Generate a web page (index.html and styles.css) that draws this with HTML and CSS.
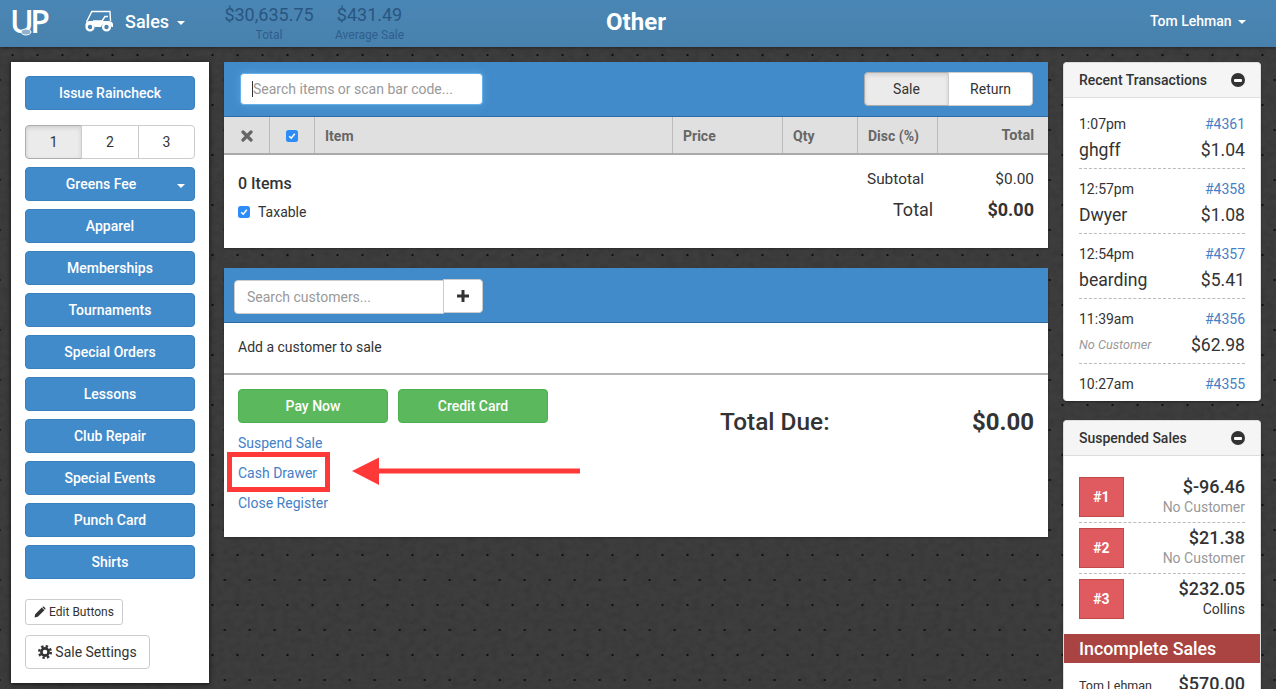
FILE: index.html
```html
<!DOCTYPE html>
<html lang="en">
<head>
<meta charset="utf-8">
<title>Other</title>
<link rel="stylesheet" href="styles.css">
</head>
<body>
<div class="page">
  <svg class="leather" width="1276" height="689" aria-hidden="true">
    <filter id="grain" x="0" y="0" width="100%" height="100%">
      <feTurbulence type="fractalNoise" baseFrequency="0.12 0.16" numOctaves="3" seed="4"/>
      <feColorMatrix type="matrix" values="0 0 0 0 0  0 0 0 0 0  0 0 0 0 0  1.1 0 0 0 -0.42"/>
    </filter>
    <rect width="1276" height="689" filter="url(#grain)"/>
  </svg>
  <header class="topbar">
    <div class="top-left">
      <div class="logo"><span class="logo-text">UP</span>
        <svg class="logo-ball" width="12" height="8" viewBox="0 0 12 8"><ellipse cx="6" cy="4" rx="5" ry="3" fill="#8fb3cf" stroke="#fff" stroke-width="1"/></svg>
      </div>
      <svg class="cart" width="30" height="24" viewBox="0 0 30 24">
        <path d="M2.500 13 L7.800 2.500 H26.500 M26 2.500 L26.500 12 M9 12 H18 L21 7.500 H24" fill="none" stroke="#fff" stroke-width="1.400"/>
        <path d="M1.500 15 Q2 12.500 5 12 H25 Q28.500 12.500 29 15 L29 18 H27.500 A5.500 5.500 0 0 0 17 18 H11 A5.500 5.500 0 0 0 1.500 17 Z" fill="#fff"/>
        <circle cx="6" cy="18" r="3.400" fill="none" stroke="#fff" stroke-width="2.400"/>
        <circle cx="22.500" cy="18" r="3.400" fill="none" stroke="#fff" stroke-width="2.400"/>
      </svg>
      <div class="module">Sales <span class="caret"></span></div>
      <div class="stat stat-total"><div class="stat-num">$30,635.75</div><div class="stat-label">Total</div></div>
      <div class="stat"><div class="stat-num">$431.49</div><div class="stat-label">Average Sale</div></div>
    </div>
    <div class="top-title">Other</div>
    <div class="top-right">Tom Lehman <span class="caret caret-sm"></span></div>
  </header>

  <main class="columns">
    <aside class="side">
      <a class="btn-blue">Issue Raincheck</a>
      <div class="seg">
        <span class="seg-item seg-on">1</span><span class="seg-item">2</span><span class="seg-item">3</span>
      </div>
      <a class="btn-blue btn-split">Greens Fee <span class="caret caret-xs"></span></a>
      <a class="btn-blue">Apparel</a>
      <a class="btn-blue">Memberships</a>
      <a class="btn-blue">Tournaments</a>
      <a class="btn-blue">Special Orders</a>
      <a class="btn-blue">Lessons</a>
      <a class="btn-blue">Club Repair</a>
      <a class="btn-blue">Special Events</a>
      <a class="btn-blue">Punch Card</a>
      <a class="btn-blue">Shirts</a>
      <a class="btn-small">
        <svg width="12" height="12" viewBox="0 0 12 12"><path d="M0.500 11.500 L1.200 8.200 L7.800 1.600 L10.400 4.200 L3.800 10.800 Z M8.600 0.800 Q9.300 0.200 10 0.800 L11.200 2 Q11.800 2.700 11.200 3.400 L10.900 3.700 L8.300 1.100 Z" fill="#333"/></svg>
        Edit Buttons</a>
      <a class="btn-settings">
        <svg width="14" height="14" viewBox="0 0 14 14"><circle cx="7" cy="7" r="5.800" fill="none" stroke="#333" stroke-width="2.400" stroke-dasharray="2.400 2.150"/><circle cx="7" cy="7" r="3.600" fill="none" stroke="#333" stroke-width="2.600"/></svg>
        Sale Settings</a>
    </aside>

    <section class="center">
      <div class="panel cart-panel">
        <div class="bluebar bar-items">
          <div class="search-wrap">
            <input class="search-input" type="text" placeholder="Search items or scan bar code...">
            <span class="text-cursor"></span>
          </div>
          <div class="toggle"><span class="toggle-item toggle-on">Sale</span><span class="toggle-item">Return</span></div>
        </div>
        <div class="thead">
          <div class="th th-c">
            <svg width="12" height="12" viewBox="0 0 12 12"><path d="M2 2 L10 10 M10 2 L2 10" stroke="#666" stroke-width="3.200" stroke-linecap="round"/></svg>
          </div>
          <div class="th th-c"><span class="check"><svg width="12" height="12" viewBox="0 0 12 12"><path d="M3.200 6.200 L5.200 8.200 L8.800 3.800" fill="none" stroke="#fff" stroke-width="1.500"/></svg></span></div>
          <div class="th">Item</div>
          <div class="th">Price</div>
          <div class="th">Qty</div>
          <div class="th">Disc (%)</div>
          <div class="th th-r">Total</div>
        </div>
        <div class="summary">
          <div class="sum-left">
            <div class="items-count">0 Items</div>
            <label class="taxable"><span class="check"><svg width="12" height="12" viewBox="0 0 12 12"><path d="M3.200 6.200 L5.200 8.200 L8.800 3.800" fill="none" stroke="#fff" stroke-width="1.500"/></svg></span>Taxable</label>
          </div>
          <div class="sum-right">
            <div class="sum-row"><span>Subtotal</span><span class="sum-val">$0.00</span></div>
            <div class="sum-row sum-total"><span>Total</span><b class="sum-val">$0.00</b></div>
          </div>
        </div>
      </div>

      <div class="panel cust-panel">
        <div class="bluebar bar-cust">
          <input class="cust-input" type="text" placeholder="Search customers...">
          <span class="plus"><svg width="14" height="14" viewBox="0 0 14 14"><path d="M7 1 V13 M1 7 H13" stroke="#333" stroke-width="3"/></svg></span>
        </div>
        <div class="cust-row">Add a customer to sale</div>
        <div class="pay">
          <div class="pay-left">
            <div class="pay-btns"><a class="btn-green">Pay Now</a><a class="btn-green">Credit Card</a></div>
            <a class="plink">Suspend Sale</a>
            <a class="plink">Cash Drawer</a>
            <a class="plink">Close Register</a>
          </div>
          <div class="due"><span>Total Due:</span><span class="due-val">$0.00</span></div>
          <span class="redbox"></span>
          <svg class="redarrow" width="228" height="30" viewBox="0 0 228 30"><path d="M0 15 L27 1.500 V12.500 H228 V17.500 H27 V29 Z" fill="#ff3838"/></svg>
        </div>
      </div>
    </section>

    <aside class="right">
      <div class="card card-recent">
        <div class="card-head"><span>Recent Transactions</span><span class="minus"></span></div>
        <div class="recent-body">
          <div class="tx"><div class="tx-line"><span>1:07pm</span><a>#4361</a></div><div class="tx-main"><span>ghgff</span><span>$1.04</span></div></div>
          <div class="tx"><div class="tx-line"><span>12:57pm</span><a>#4358</a></div><div class="tx-main"><span>Dwyer</span><span>$1.08</span></div></div>
          <div class="tx"><div class="tx-line"><span>12:54pm</span><a>#4357</a></div><div class="tx-main"><span>bearding</span><span>$5.41</span></div></div>
          <div class="tx"><div class="tx-line"><span>11:39am</span><a>#4356</a></div><div class="tx-main"><em>No Customer</em><span>$62.98</span></div></div>
          <div class="tx tx-last"><div class="tx-line"><span>10:27am</span><a>#4355</a></div></div>
        </div>
      </div>
      <div class="card card-susp">
        <div class="card-head"><span>Suspended Sales</span><span class="minus"></span></div>
        <div class="susp-body">
          <div class="susp"><span class="tag">#1</span><div class="susp-info"><div class="susp-amt">$-96.46</div><div class="susp-name muted">No Customer</div></div></div>
          <div class="susp"><span class="tag">#2</span><div class="susp-info"><div class="susp-amt">$21.38</div><div class="susp-name muted">No Customer</div></div></div>
          <div class="susp susp-last"><span class="tag">#3</span><div class="susp-info"><div class="susp-amt">$232.05</div><div class="susp-name">Collins</div></div></div>
        </div>
        <div class="incomplete">Incomplete Sales</div>
        <div class="inc-row"><span class="inc-name">Tom Lehman</span><span class="inc-amt">$570.00</span></div>
      </div>
    </aside>
  </main>
</div>
</body>
</html>
```

FILE: styles.css
```css
* { box-sizing: border-box; }
html, body { margin: 0; height: 100%; }
body {
  font-family: Roboto, "Liberation Sans", sans-serif;
  font-size: 14px;
  color: #333;
  overflow: hidden;
}
a { text-decoration: none; cursor: pointer; }

.page {
  position: relative;
  width: 1276px;
  height: 689px;
  overflow: hidden;
  background-color: #3d3d3d;
  background-image:
    radial-gradient(circle, #0a0a0a 0, rgba(10,10,10,.85) .7px, rgba(0,0,0,0) 1.5px),
    radial-gradient(circle, #0a0a0a 0, rgba(10,10,10,.85) .7px, rgba(0,0,0,0) 1.5px);
  background-size: 25px 50px;
  background-position: 0 -20px, 12.2px 5px;
}
.leather { position: absolute; left: 0; top: 0; pointer-events: none; opacity: .16; }

/* top bar */
.topbar {
  height: 47px;
  background: linear-gradient(#4a86b5, #4881ad);
  box-shadow: 0 1px 3px rgba(0,0,0,.4);
  display: flex;
  align-items: center;
  color: #fff;
  position: relative;
}
.top-left { display: flex; align-items: center; width: 604px; padding-left: 10px; }
.logo { width: 38px; height: 37px; position: relative; margin-right: 36px; margin-top: -6px; white-space: nowrap; }
.logo-text {
  font-family: "Open Sans", sans-serif;
  font-weight: 600;
  font-size: 32px;
  line-height: 37px;
  letter-spacing: -3.5px;
  color: #fff;
}
.logo-ball { position: absolute; left: 10px; top: 26px; }
.cart { margin-right: 11px; margin-top: -5px; }
.module { font-size: 18px; font-weight: 500; width: 99px; white-space: nowrap; margin-top: -4px; }
.caret {
  display: inline-block;
  width: 0; height: 0;
  border-left: 4px solid transparent;
  border-right: 4px solid transparent;
  border-top: 4px solid #fff;
  vertical-align: middle;
  margin-left: 3px;
}
.stat { text-align: center; color: #295680; white-space: nowrap; }
.stat-total { width: 90px; margin-right: 21px; }
.stat-num { font-size: 18px; line-height: 21px; margin-top: 1px; }
.stat-label { font-size: 12px; line-height: 17px; color: #2f5f8b; padding-top: 2px; }
.top-title { width: 64px; text-align: center; font-size: 24px; font-weight: 700; margin-top: -3px; }
.top-right { margin-left: auto; padding-right: 30px; font-size: 14px; font-weight: 500; margin-top: -6px; white-space: nowrap; }

/* columns */
.columns { position: relative; display: flex; align-items: flex-start; padding: 15px 15px 0 11px; gap: 15px; }

/* left */
.side {
  width: 198px;
  height: 621px;
  background: #fff;
  padding: 14px;
  display: flex;
  flex-direction: column;
  align-items: flex-start;
  box-shadow: 0 1px 5px rgba(0,0,0,.7);
  flex: none;
}
.btn-blue {
  width: 170px;
  height: 34px;
  flex: none;
  display: flex;
  align-items: center;
  justify-content: center;
  background: #428bca;
  border: 1px solid #3b80bc;
  border-radius: 4px;
  color: #fff;
  font-weight: 500;
  font-size: 14px;
  margin-bottom: 8px;
  position: relative;
}
.side > .btn-blue:first-child { margin-bottom: 15px; }
.btn-split { padding-right: 18px; }
.caret-xs { position: absolute; right: 9px; top: 16px; }
.seg { display: flex; width: 170px; height: 34px; margin-bottom: 8px; flex: none; }
.seg-item {
  flex: 1;
  display: flex;
  align-items: center;
  justify-content: center;
  background: #fff;
  border: 1px solid #ccc;
  margin-left: -1px;
  color: #333;
}
.seg-item:first-child { margin-left: 0; border-radius: 4px 0 0 4px; }
.seg-item:last-child { border-radius: 0 4px 4px 0; }
.seg-on { background: #ebebeb; border-color: #adadad; box-shadow: inset 0 2px 4px rgba(0,0,0,.12); }
.btn-small {
  margin-top: 12px;
  width: 98px;
  height: 26px;
  flex: none;
  border: 1px solid #ccc;
  border-radius: 3px;
  color: #333;
  font-size: 12px;
  display: flex;
  align-items: center;
  justify-content: center;
  gap: 3px;
  white-space: nowrap;
}
.btn-settings {
  margin-top: 10px;
  width: 125px;
  height: 34px;
  flex: none;
  border: 1px solid #ccc;
  border-radius: 4px;
  color: #333;
  font-size: 14px;
  display: flex;
  align-items: center;
  justify-content: center;
  gap: 3px;
  white-space: nowrap;
}

/* center */
.center { width: 824px; flex: none; display: flex; flex-direction: column; gap: 20px; }
.panel { background: #fff; box-shadow: 0 1px 2px rgba(0,0,0,.3); }
.bluebar { background: #428bca; display: flex; align-items: center; border-bottom: 1px solid #2c6ca3; }
.bar-items { height: 55px; padding: 0 15px 0 16px; justify-content: space-between; }
.search-wrap { position: relative; width: 243px; height: 32px; margin-top: -1px; }
.search-input {
  width: 100%;
  height: 100%;
  border: 1px solid #66afe9;
  border-radius: 4px;
  padding: 0 12px;
  font: 14px Roboto, sans-serif;
  outline: 0;
  box-shadow: 0 0 8px rgba(102,175,233,.6);
}
.search-input::placeholder, .cust-input::placeholder { color: #999; opacity: 1; }
.text-cursor { position: absolute; left: 12px; top: 8px; width: 1px; height: 16px; background: #333; }
.toggle { display: flex; width: 169px; height: 34px; margin-top: -1px; }
.toggle-item {
  flex: 1;
  display: flex;
  align-items: center;
  justify-content: center;
  background: #fff;
  border: 1px solid #ccc;
  margin-left: -1px;
  border-radius: 0 4px 4px 0;
  color: #333;
}
.toggle-on { margin-left: 0; border-radius: 4px 0 0 4px; background: #ebebeb; border-color: #adadad; box-shadow: inset 0 2px 4px rgba(0,0,0,.12); }
.thead {
  display: grid;
  grid-template-columns: 46px 45px 358px 110px 75px 80px 110px;
  height: 38px;
  background: #e0e0e0;
  border-bottom: 2px solid #aaa;
  color: #666;
  font-weight: 700;
  font-size: 14px;
}
.th { display: flex; align-items: center; padding: 1px 0 0 10px; border-right: 1px solid #bbb; }
.th:last-child { border-right: 0; }
.th-c { justify-content: center; padding-left: 0; }
.th-r { justify-content: flex-end; padding: 1px 14px 0 0; font-size: 14.5px; }
.check {
  display: inline-flex;
  width: 12px;
  height: 12px;
  background: #2e8cf7;
  border-radius: 2.5px;
  flex: none;
}
.summary { height: 93px; display: flex; justify-content: space-between; padding: 0 14px; }
.sum-left { padding-top: 19px; }
.items-count { font-size: 16px; font-weight: 500; line-height: 20px; color: #333; }
.taxable { display: flex; align-items: center; gap: 8px; margin-top: 8px; line-height: 20px; }
.sum-right { padding-top: 14px; width: 167px; }
.sum-row { display: flex; justify-content: space-between; line-height: 20px; font-size: 15.4px; }
.sum-total { font-size: 18px; line-height: 26px; margin-top: 8px; padding-left: 26px; }
.sum-val { font-weight: 400; }
.sum-total .sum-val { font-weight: 700; }

.bar-cust { height: 55px; padding: 11px 10px 0; align-items: flex-start; }
.cust-input {
  width: 210px;
  height: 34px;
  margin-top: 1px;
  border: 1px solid #ccc;
  border-radius: 4px 0 0 4px;
  padding: 0 12px;
  font: 14px Roboto, sans-serif;
  outline: 0;
}
.plus {
  width: 40px;
  height: 34px;
  margin-left: -1px;
  background: #fff;
  border: 1px solid #ccc;
  border-radius: 0 4px 4px 0;
  display: flex;
  align-items: center;
  justify-content: center;
}
.cust-row { height: 52px; padding-left: 14px; line-height: 49px; border-bottom: 2px solid #b5b5b5; color: #333; }
.pay { position: relative; height: 162px; padding: 14px 14px 0; display: flex; justify-content: space-between; }
.pay-left { display: flex; flex-direction: column; align-items: flex-start; }
.pay-btns { display: flex; gap: 10px; margin-bottom: 10px; }
.btn-green {
  width: 150px;
  height: 34px;
  background: #5cb85c;
  border: 1px solid #4cae4c;
  border-radius: 4px;
  color: #fff;
  font-weight: 500;
  display: flex;
  align-items: center;
  justify-content: center;
}
.plink { color: #4480c6; line-height: 20px; margin-bottom: 10px; }
.due { width: 314px; display: flex; justify-content: space-between; font-size: 24.4px; font-weight: 500; color: #333; line-height: 28px; margin-top: 19px; height: 28px; }
.due-val { font-weight: 700; font-size: 24px; }
.redbox {
  position: absolute;
  left: 3px;
  top: 77px;
  width: 103px;
  height: 40px;
  border: 5px solid #ff3838;
}
.redarrow { position: absolute; left: 128px; top: 81px; }

/* right */
.right { width: 198px; flex: none; display: flex; flex-direction: column; gap: 19px; }
.card { background: #fff; border-radius: 4px 4px 0 0; box-shadow: 0 1px 2px rgba(0,0,0,.4); border: 1px solid #ddd; border-bottom: 0; }
.card-head {
  height: 35px;
  background: #f5f5f5;
  border-bottom: 1px solid #ddd;
  border-radius: 4px 4px 0 0;
  padding: 0 15px;
  display: flex;
  align-items: center;
  justify-content: space-between;
  font-weight: 500;
  color: #333;
}
.minus { width: 14px; height: 14px; border-radius: 50%; background: #333; position: relative; flex: none; }
.minus::after { content: ""; position: absolute; left: 3px; top: 5.5px; width: 8px; height: 3px; border-radius: 1px; background: #fff; }
.card-recent { height: 339px; overflow: hidden; border-radius: 4px; }
.recent-body { padding: 15px 15px 0; }
.tx { height: 65px; border-bottom: 1px dashed #bbb; padding-top: 9px; }
.tx:first-child { height: 56px; padding-top: 0; }
.tx-line { display: flex; justify-content: space-between; line-height: 22px; }
.tx-line a { color: #4480c6; }
.tx-main { display: flex; justify-content: space-between; align-items: center; font-size: 17.6px; line-height: 26px; margin-top: 2px; }
.tx-main em { font-size: 12.7px; color: #999; }
.tx-last { border-bottom: 0; height: auto; }
.card-susp { height: 400px; }
.susp-body { padding: 21px 15px 0; }
.susp { display: flex; justify-content: space-between; height: 51px; border-bottom: 1px dashed #bbb; padding-top: 5px; }
.susp:first-child { height: 46px; padding-top: 0; }
.susp-last { border-bottom: 0; height: 45px; }
.tag {
  width: 45px;
  height: 40px;
  background: #e05b5f;
  border: 1px solid #c04a4a;
  color: #fff;
  font-weight: 700;
  display: flex;
  align-items: center;
  justify-content: center;
  flex: none;
}
.susp-info { text-align: right; margin-top: -2px; }
.susp-amt { font-size: 18px; font-weight: 500; line-height: 24px; }
.susp-name { line-height: 18px; margin-top: -1px; }
.muted { color: #999; }
.incomplete {
  margin-top: 15px;
  height: 29px;
  background: #a94442;
  color: #fff;
  font-size: 17.8px;
  font-weight: 500;
  line-height: 29px;
  padding-left: 15px;
}
.inc-row { display: flex; justify-content: space-between; align-items: baseline; padding: 10px 15px 0; line-height: 22px; }
.inc-name { font-size: 12.5px; }
.inc-amt { font-size: 18px; font-weight: 500; }
```
